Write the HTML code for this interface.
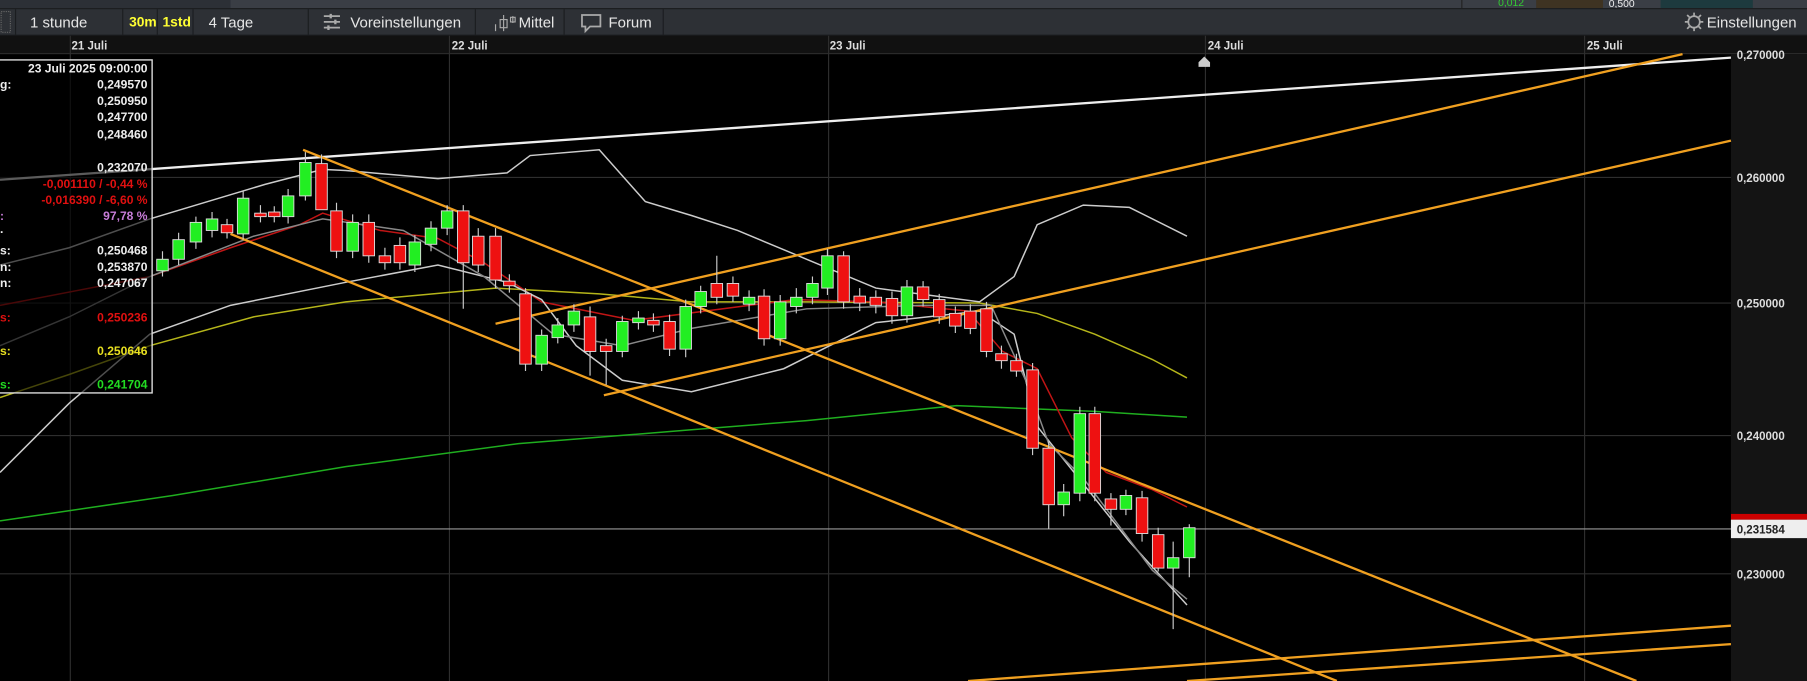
<!DOCTYPE html>
<html><head><meta charset="utf-8"><style>
html,body{margin:0;padding:0;background:#000;width:1807px;height:681px;overflow:hidden}
svg{display:block}
text{font-family:"Liberation Sans",sans-serif}
</style></head><body>
<svg width="1807" height="681" viewBox="0 0 1568 591" preserveAspectRatio="none" xmlns="http://www.w3.org/2000/svg">
<rect x="0" y="0" width="1568" height="591" fill="#000"/>
<!-- top strip -->
<rect x="0" y="0" width="1568" height="7" fill="#3a3e45"/>
<rect x="0" y="0" width="200" height="7" fill="#2c3036"/>
<rect x="1268" y="0" width="1" height="7" fill="#222"/>
<text x="1300" y="5" font-size="9" fill="#3c3">0,012</text>
<rect x="1333" y="0" width="58" height="7" fill="#3e3322"/>
<text x="1396" y="6" font-size="9" fill="#eee">0,500</text>
<rect x="1441" y="0" width="80" height="7" fill="#1d3a3e"/>
<!-- toolbar -->
<rect x="0" y="7" width="1568" height="24" fill="#2d3035"/>
<rect x="0" y="7" width="1568" height="1" fill="#1b1d20"/>
<rect x="0" y="30" width="1568" height="1" fill="#1b1d20"/>
<g fill="#1b1d20">
<rect x="13" y="8" width="1" height="22"/><rect x="106" y="8" width="1" height="22"/><rect x="136" y="8" width="1" height="22"/><rect x="167" y="8" width="1" height="22"/><rect x="267" y="8" width="1" height="22"/><rect x="412" y="8" width="1" height="22"/><rect x="489" y="8" width="1" height="22"/><rect x="575" y="8" width="1" height="22"/>
</g>
<g font-size="13" fill="#e6e6e6">
<text x="26" y="24">1 stunde</text>
<text x="112" y="23" font-size="12" fill="#ffff33" font-weight="bold">30m</text>
<text x="141" y="23" font-size="12" fill="#ffff33" font-weight="bold">1std</text>
<text x="181" y="24">4 Tage</text>
<text x="304" y="24">Voreinstellungen</text>
<text x="450" y="24">Mittel</text>
<text x="528" y="24">Forum</text>
<text x="1481" y="24">Einstellungen</text>
</g>
<g stroke="#aaa" stroke-width="1.5" fill="none">
<path d="M281 14h14M281 19h14M281 24h14"/>
<path d="M287 12v4M291 17v4M285 22v4" stroke-width="2"/>
<path d="M437 13v14M434 17h6v7h-6zM430 21v6M445 14v6M443 15h4v4h-4z" stroke-width="1"/>
<path d="M505 13h16v10h-9l-4 4v-4h-3z"/>
<circle cx="1470" cy="19" r="5"/>
<path d="M1470 11v3M1470 24v3M1462 19h3M1475 19h3M1464 13l2 2M1474 23l2 2M1464 25l2-2M1474 15l2-2"/>
</g>
<rect x="1" y="10" width="8" height="18" fill="none" stroke="#666" stroke-dasharray="1,1"/>
<!-- date axis -->
<rect x="0" y="31" width="1568" height="16" fill="#111"/>
<rect x="0" y="46" width="1568" height="1" fill="#2a2a2a"/>
<g font-size="10" fill="#ddd" font-weight="bold">
<text x="62" y="43">21 Juli</text><text x="392" y="43">22 Juli</text><text x="720" y="43">23 Juli</text><text x="1048" y="43">24 Juli</text><text x="1377" y="43">25 Juli</text>
</g>
<!-- price axis -->
<rect x="1502" y="47" width="66" height="544" fill="#141414"/>
<!-- grid -->
<g stroke="#2e2e2e" stroke-width="1">
<path d="M61 31V591M390 31V591M719 31V591M1046 31V591M1375 31V591"/>
<path d="M0 154H1502M0 263H1502M0 378H1502M0 498H1502"/>
</g>
<g font-size="10" fill="#ddd" font-weight="bold">
<text x="1507" y="51">0,270000</text><text x="1507" y="158">0,260000</text><text x="1507" y="267">0,250000</text><text x="1507" y="382">0,240000</text><text x="1507" y="502">0,230000</text>
</g>
<!-- price line -->
<path d="M0 459H1502" stroke="#999" stroke-width="1"/>
<rect x="1502" y="446" width="66" height="5" fill="#c00"/>
<rect x="1502" y="451" width="66" height="16" fill="#eee"/>
<text x="1507" y="463" font-size="10" font-weight="bold" fill="#222">0,231584</text>
<path d="M1040 58v-4l5-5 5 5v4z" fill="#ccc"/>
<!-- MAs -->
<g fill="none" stroke-width="1.3">
<polyline stroke="#1fae1f" points="0,452 150,430 300,405 450,385 600,373 700,365 830,352 950,357 1030,362"/>
<polyline stroke="#b5b51a" points="0,345 60,325 130,300 220,275 300,262 430,250 520,255 600,262 700,262 850,263 900,272 950,290 1000,312 1030,328"/>
<polyline stroke="#c01515" points="0,265 130,240 200,215 260,195 280,185 330,200 380,207 420,228 470,262 550,278 650,265 690,260 760,262 840,270 870,305 900,320 930,380 960,410 1000,425 1030,440"/>
<polyline stroke="#ccc" points="0,230 60,215 130,190 230,160 280,147 300,148 380,155 440,150 460,135 520,130 560,175 600,187 640,200 700,225 760,250 850,262 880,240 900,195 940,178 980,180 1030,205"/>
<polyline stroke="#ccc" points="0,410 60,350 130,290 200,265 300,245 380,230 440,245 470,260 500,300 540,330 600,340 680,320 760,280 850,270 880,290 900,370 940,420 980,470 1030,525"/>
<polyline stroke="#888" points="0,300 60,275 130,240 220,205 280,190 350,200 420,240 480,290 540,300 600,285 700,268 800,265 860,265 890,330 910,385 940,415 970,455 1000,495 1030,520"/>
</g>
<!-- trendlines -->
<g stroke-width="2" fill="none">
<path d="M0 156L1502 50" stroke="#eee"/>
<path d="M263 130L1420 591" stroke="#f0a020"/>
<path d="M200 203L1160 591" stroke="#f0a020"/>
<path d="M524 343L1502 122" stroke="#f0a020"/>
<path d="M430 281L1460 47" stroke="#f0a020"/>
<path d="M840 591L1502 543" stroke="#f0a020"/>
<path d="M1030 591L1502 559" stroke="#f0a020"/>
</g>
<!-- candles -->
<g stroke="#ccc" stroke-width="1">
<path d="M141 218v22M155 202v28M170 188v28M184 184v22M197 190v17M211 166v42M226 178v15M238 179v14M250 164v30M265 132v42M279 134v20M292 176v48M306 186v38M320 186v42M334 215v19M347 206v28M360 204v32M374 192v26M388 178v26M402 178v90M415 198v38M430 198v52M442 238v16M456 250v72M470 286v36M484 276v22M498 264v24M512 266v60M526 294v40M540 274v36M554 270v16M567 272v16M581 273v36M595 260v50M608 248v24M622 222v42M636 240v22M650 252v18M663 251v49M677 256v44M691 250v22M705 240v24M718 216v40M732 218v50M746 250v20M760 252v20M774 253v28M787 243v37M801 244v22M815 255v26M829 266v23M842 264v26M856 262v48M869 300v20M882 307v20M896 315v80M910 383v76M923 420v28M937 353v82M950 353v82M964 428v28M977 425v22M991 426v44M1005 458v38M1018 470v76M1032 455v46"/>
</g>
<g stroke="#ddd" stroke-width="0.8">
<g fill="#22ee22">
<rect x="136" y="225" width="10" height="10"/><rect x="150" y="208" width="10" height="17"/><rect x="165" y="193" width="10" height="17"/><rect x="179" y="190" width="10" height="10"/><rect x="206" y="172" width="10" height="31"/><rect x="245" y="170" width="10" height="18"/><rect x="260" y="141" width="10" height="29"/><rect x="301" y="193" width="10" height="25"/><rect x="355" y="210" width="10" height="20"/><rect x="369" y="198" width="10" height="14"/><rect x="383" y="183" width="10" height="15"/><rect x="465" y="291" width="10" height="25"/><rect x="479" y="282" width="10" height="11"/><rect x="493" y="270" width="10" height="12"/><rect x="535" y="279" width="10" height="26"/><rect x="549" y="276" width="10" height="4"/><rect x="590" y="266" width="10" height="37"/><rect x="603" y="253" width="10" height="13"/><rect x="645" y="258" width="10" height="6"/><rect x="672" y="262" width="10" height="32"/><rect x="686" y="258" width="10" height="8"/><rect x="700" y="246" width="10" height="12"/><rect x="713" y="222" width="10" height="28"/><rect x="782" y="249" width="10" height="25"/><rect x="918" y="427" width="10" height="11"/><rect x="932" y="359" width="10" height="69"/><rect x="972" y="430" width="10" height="12"/><rect x="1013" y="484" width="10" height="9"/><rect x="1027" y="458" width="10" height="26"/>
</g>
<g fill="#ee1111">
<rect x="192" y="195" width="10" height="7"/><rect x="221" y="185" width="10" height="3"/><rect x="233" y="184" width="10" height="4"/><rect x="274" y="142" width="10" height="40"/><rect x="287" y="183" width="10" height="35"/><rect x="315" y="193" width="10" height="29"/><rect x="329" y="222" width="10" height="6"/><rect x="342" y="213" width="10" height="15"/><rect x="397" y="183" width="10" height="45"/><rect x="410" y="205" width="10" height="25"/><rect x="425" y="205" width="10" height="38"/><rect x="437" y="244" width="10" height="4"/><rect x="451" y="255" width="10" height="61"/><rect x="507" y="275" width="10" height="30"/><rect x="521" y="300" width="10" height="5"/><rect x="562" y="278" width="10" height="4"/><rect x="576" y="279" width="10" height="24"/><rect x="617" y="246" width="10" height="12"/><rect x="631" y="246" width="10" height="11"/><rect x="658" y="257" width="10" height="37"/><rect x="727" y="222" width="10" height="40"/><rect x="741" y="257" width="10" height="6"/><rect x="755" y="258" width="10" height="7"/><rect x="769" y="259" width="10" height="15"/><rect x="796" y="249" width="10" height="11"/><rect x="810" y="260" width="10" height="15"/><rect x="824" y="272" width="10" height="11"/><rect x="837" y="270" width="10" height="15"/><rect x="851" y="268" width="10" height="37"/><rect x="864" y="307" width="10" height="6"/><rect x="877" y="313" width="10" height="9"/><rect x="891" y="321" width="10" height="68"/><rect x="905" y="389" width="10" height="49"/><rect x="945" y="359" width="10" height="69"/><rect x="959" y="433" width="10" height="9"/><rect x="986" y="432" width="10" height="31"/><rect x="1000" y="464" width="10" height="29"/>
</g>
</g>
<!-- info panel -->
<rect x="-2" y="52" width="134" height="289" fill="rgba(0,0,0,0.62)" stroke="#ddd" stroke-width="1.2"/>
<g font-size="10.5" font-weight="bold" text-anchor="end" fill="#eee">
<text x="128" y="63">23 Juli 2025 09:00:00</text>
<text x="128" y="77">0,249570</text><text x="128" y="91">0,250950</text><text x="128" y="105">0,247700</text><text x="128" y="120">0,248460</text>
<text x="128" y="149">0,232070</text>
<text x="128" y="163" fill="#e01010">-0,001110 / -0,44 %</text>
<text x="128" y="177" fill="#e01010">-0,016390 / -6,60 %</text>
<text x="128" y="191" fill="#c77dd8">97,78 %</text>
<text x="128" y="221">0,250468</text><text x="128" y="235">0,253870</text><text x="128" y="249">0,247067</text>
<text x="128" y="279" fill="#e01010">0,250236</text>
<text x="128" y="308" fill="#e8e020">0,250646</text>
<text x="128" y="337" fill="#22dd22">0,241704</text>
</g>
<g font-size="10.5" font-weight="bold" fill="#eee">
<text x="0" y="77">g:</text><text x="0" y="191" fill="#c77dd8">:</text><text x="0" y="205">·</text>
<text x="0" y="221">s:</text><text x="0" y="235">n:</text><text x="0" y="249">n:</text>
<text x="0" y="279" fill="#e01010">s:</text><text x="0" y="308" fill="#e8e020">s:</text><text x="0" y="337" fill="#22dd22">s:</text>
</g>
</svg>
</body></html>
